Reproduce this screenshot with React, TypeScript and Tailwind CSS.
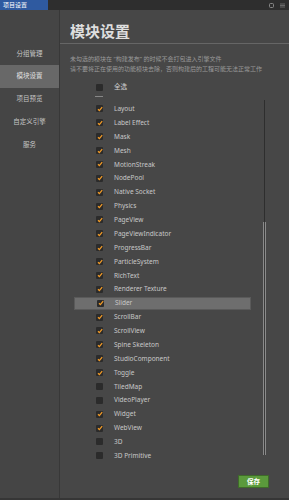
import React, { type ReactElement } from 'react'

interface ModuleItem {
    name: string
    checked: boolean
}

const modules: ModuleItem[] = [
    { name: 'Layout', checked: true },
    { name: 'Label Effect', checked: true },
    { name: 'Mask', checked: true },
    { name: 'Mesh', checked: true },
    { name: 'MotionStreak', checked: true },
    { name: 'NodePool', checked: true },
    { name: 'Native Socket', checked: true },
    { name: 'Physics', checked: true },
    { name: 'PageView', checked: true },
    { name: 'PageViewIndicator', checked: true },
    { name: 'ProgressBar', checked: true },
    { name: 'ParticleSystem', checked: true },
    { name: 'RichText', checked: true },
    { name: 'Renderer Texture', checked: true },
    { name: 'Slider', checked: true },
    { name: 'ScrollBar', checked: true },
    { name: 'ScrollView', checked: true },
    { name: 'Spine Skeleton', checked: true },
    { name: 'StudioComponent', checked: true },
    { name: 'Toggle', checked: true },
    { name: 'TiledMap', checked: false },
    { name: 'VideoPlayer', checked: false },
    { name: 'Widget', checked: true },
    { name: 'WebView', checked: true },
    { name: '3D', checked: false },
    { name: '3D Primitive', checked: false },
]

const navItems = ['分组管理', '模块设置', '项目预览', '自定义引擎', '服务']

function CheckBox({ checked }: { checked: boolean }): ReactElement {
    return (
        <div className="w-[7px] h-[7px] rounded-[1px] bg-[#2b2b2b] flex items-center justify-center">
            {checked && (
                <svg width="6" height="6" viewBox="0 0 6 6">
                    <path d="M1 3.2 L2.4 4.6 L5.2 1.2" stroke="#f29b27" strokeWidth="1.3" fill="none" />
                </svg>
            )}
        </div>
    )
}

export default function App(): ReactElement {
    return (
        <div
            className="w-[289px] h-[500px] bg-[#474747] flex flex-col overflow-hidden"
            style={{ fontFamily: '"Noto Sans", "Noto Sans CJK SC", sans-serif' }}
        >
            {/* top bar */}
            <div className="h-[10px] bg-[#2e2e2e] flex justify-between items-stretch">
                <div className="w-[48px] bg-[#2f5aa0] text-white text-[6px] leading-[10px] pl-[3px]">
                    项目设置
                </div>
                <div className="flex items-center gap-[6px] pr-[4px]">
                    <svg width="5" height="5" viewBox="0 0 5 5">
                        <rect x="0.5" y="0.5" width="4" height="4" rx="1" fill="none" stroke="#888" />
                    </svg>
                    <svg width="5" height="5" viewBox="0 0 5 5">
                        <path d="M0 1h5M0 2.5h5M0 4h5" stroke="#777" strokeWidth="0.8" />
                    </svg>
                </div>
            </div>

            <div className="flex flex-1 min-h-0">
                {/* sidebar */}
                <div className="w-[60px] shrink-0 border-r border-[#383838] bg-[#454545] flex flex-col pt-[32px]">
                    {navItems.map((n) => (
                        <div
                            key={n}
                            className={
                                n === '模块设置'
                                    ? 'h-[22.8px] flex items-center justify-center text-[6.5px] text-[#e0e0e0] bg-[#686868]'
                                    : 'h-[22.8px] flex items-center justify-center text-[6.5px] text-[#c4c4c4]'
                            }
                        >
                            {n}
                        </div>
                    ))}
                </div>

                {/* main */}
                <div className="flex-1 flex flex-col">
                    <div className="h-[34px] border-b border-[#666] pl-[10px] pt-[11px]">
                        <p className="text-[15px] leading-[20px] font-bold text-[#dedede]">模块设置</p>
                    </div>
                    <div className="pl-[10px] pt-[10px] text-[6px] leading-[10px] text-[#9a9a9a]">
                        <p>未勾选的模块在 “构建发布” 的时候不会打包进入引擎文件</p>
                        <p>请不要将正在使用的功能模块去除，否则构建后的工程可能无法正常工作</p>
                    </div>

                    <div className="mt-[6px] h-[14px] flex items-center pl-[36px]">
                        <CheckBox checked={false} />
                        <span className="ml-[11px] text-[6.5px] text-[#d0d0d0]">全选</span>
                    </div>
                    <div className="ml-[35px] mt-[2px] w-[8px] h-px bg-[#888]" />

                    <div className="mt-[5px] flex">
                        <div className="w-[203px] flex flex-col">
                            {modules.map((m) => (
                                <div key={m.name} className="h-[13.88px] flex items-center">
                                    <div
                                        className={
                                            m.name === 'Slider'
                                                ? 'ml-[14px] w-[177px] h-[13px] flex items-center pl-[22px] bg-[#6e6e6e] border border-[#5a5a5a]'
                                                : 'ml-[14px] w-[177px] h-[13px] flex items-center pl-[22px]'
                                        }
                                    >
                                        <CheckBox checked={m.checked} />
                                        <span className="ml-[11px] text-[6.5px] text-[#c8c8c8] whitespace-nowrap">
                                            {m.name}
                                        </span>
                                    </div>
                                </div>
                            ))}
                        </div>
                        {/* scrollbar */}
                        <div className="w-[3px] flex flex-col h-[355px] -mt-[2px]">
                            <div className="h-[122px] w-px ml-px bg-[#2e2e2e]" />
                            <div className="flex-1 w-[3px] border-x border-[#8a8a8a] bg-[#3a3a3a]" />
                        </div>
                    </div>

                    <div className="flex-1" />
                    <div className="flex justify-end pr-[20px] pb-[10px]">
                        <button className="w-[31px] h-[13px] bg-[#5b9a3c] border border-[#3f6b2a] text-white text-[6.5px] font-bold flex items-center justify-center">
                            保存
                        </button>
                    </div>
                </div>
            </div>
            <div className="h-[2px] bg-[#363636]" />
        </div>
    )
}
